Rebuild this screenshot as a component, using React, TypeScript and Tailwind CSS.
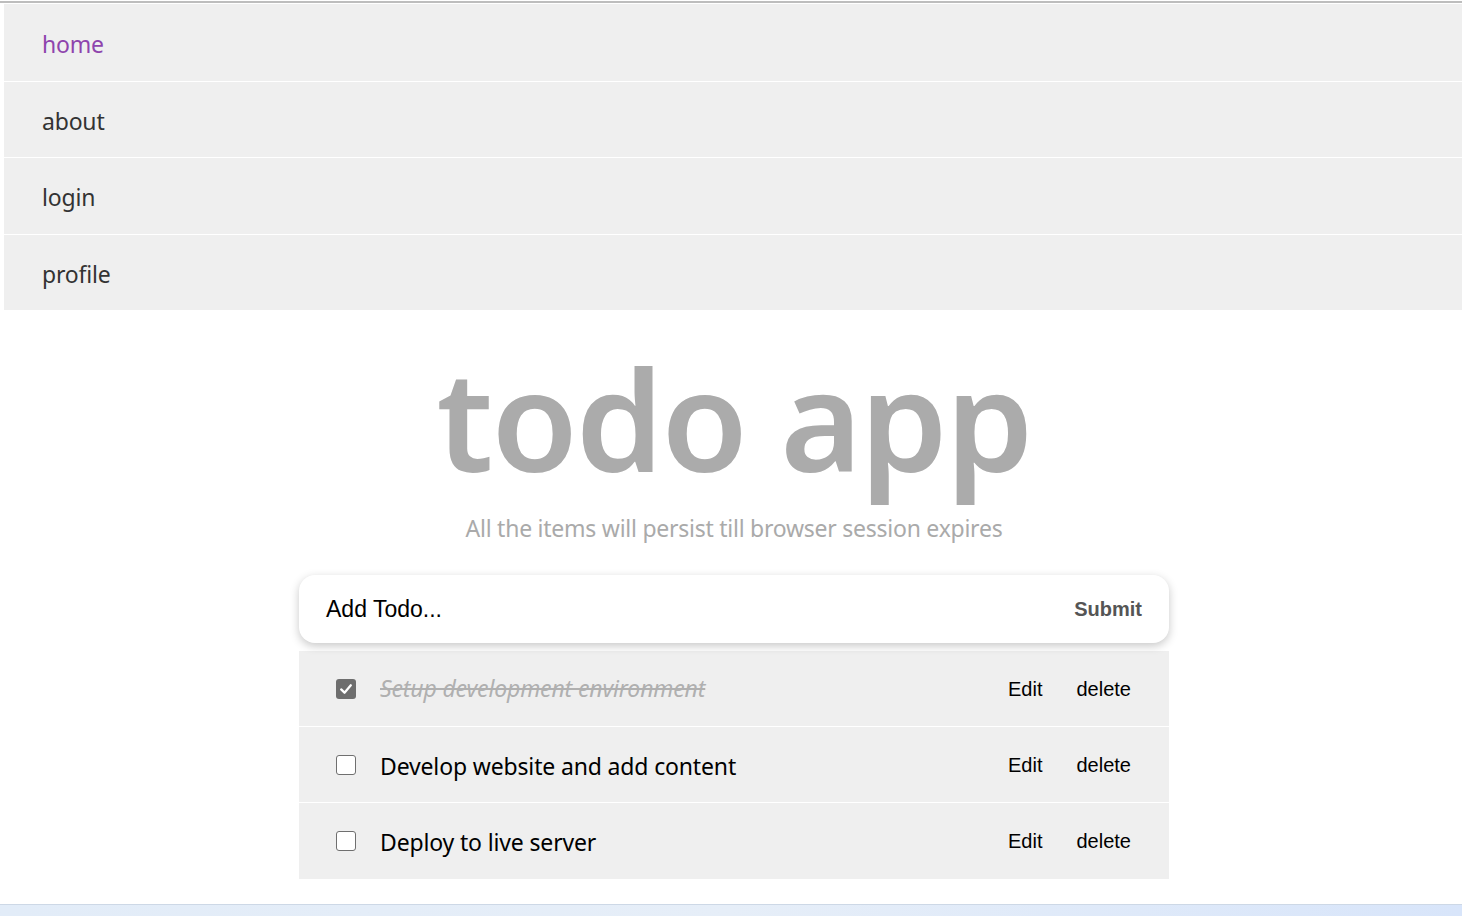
import React from "react";

const sans = { fontFamily: '"Noto Sans", "Open Sans", sans-serif' };
const arial = { fontFamily: '"Liberation Sans", Arial, sans-serif' };

function Check({ checked }: { checked: boolean }) {
  if (checked) {
    return (
      <span className="flex h-[20px] w-[20px] items-center justify-center rounded-[3px] bg-[#6e6e6e]">
        <svg width="14" height="14" viewBox="0 0 16 16">
          <path d="M2.5 8.5 L6.3 12.2 L13.5 3.8" fill="none" stroke="#fff" strokeWidth="2.6" strokeLinecap="round" strokeLinejoin="round" />
        </svg>
      </span>
    );
  }
  return <span className="block h-[20px] w-[20px] rounded-[3px] border-[1.5px] border-[#6f6f6f] bg-white" />;
}

const todos = [
  { text: "Setup development environment", done: true },
  { text: "Develop website and add content", done: false },
  { text: "Deploy to live server", done: false },
];

const nav = [
  { label: "home", cls: "h-[78px] border-b border-white text-[#8e44ad]" },
  { label: "about", cls: "h-[76px] border-b border-white text-[#333333]" },
  { label: "login", cls: "h-[77px] border-b border-white text-[#333333]" },
  { label: "profile", cls: "h-[75px] text-[#333333]" },
];

export default function App() {
  return (
    <div className="min-h-[916px] bg-white">
      <div className="h-px bg-white" />
      <div className="h-[2px] bg-[#bdbdbd]" />
      <div className="h-px bg-white" />
      <div className="ml-[4px]">
        <nav className="flex flex-col">
          {nav.map((n) => (
            <div
              key={n.label}
              className={`flex items-center bg-[#efefef] pl-[38px] pt-[3px] text-[23px] tracking-[-0.2px] ${n.cls}`}
              style={sans}
            >
              {n.label}
            </div>
          ))}
        </nav>
        <div className="ml-[2px] flex flex-col items-center">
          <h1
            className="mt-[38px] text-[140px] font-semibold leading-none tracking-[-2px] text-[#ababab]"
            style={sans}
          >
            todo app
          </h1>
          <p className="mt-[29px] text-[23px] leading-none tracking-[-0.25px] text-[#aaaaaa]" style={sans}>
            All the items will persist till browser session expires
          </p>
          <div className="mt-[35px] w-[870px]">
            <div
              className="relative z-10 flex h-[68px] items-center justify-between rounded-[16px] bg-white pl-[27px] pr-[27px] shadow-[0_3px_10px_rgba(0,0,0,0.22)]"
              style={arial}
            >
              <span className="text-[23px] text-black">Add Todo...</span>
              <span className="text-[20px] font-bold text-[#555555]">Submit</span>
            </div>
            <div className="mt-[8px] flex flex-col">
              {todos.map((t, i) => (
                <div
                  key={t.text}
                  className={`flex h-[76px] items-center bg-[#efefef] pl-[37px] pr-[38px] ${i < todos.length - 1 ? "border-b border-white" : ""}`}
                >
                  <Check checked={t.done} />
                  <span
                    className={`ml-[24px] flex-1 text-[23px] tracking-[-0.15px] ${t.done ? "italic text-[#b0b0b0] line-through" : "pt-[3px] text-black"}`}
                    style={sans}
                  >
                    {t.text}
                  </span>
                  <div className="flex items-center gap-[34px] text-[20px] text-black" style={arial}>
                    <span>Edit</span>
                    <span>delete</span>
                  </div>
                </div>
              ))}
            </div>
          </div>
        </div>
      </div>
      <div className="fixed bottom-0 left-0 right-0 h-[12px] border-t border-[#cdd8e6] bg-gradient-to-r from-[#e2ecf8] via-[#e6eef8] to-[#d8e5fa]" />
    </div>
  );
}
